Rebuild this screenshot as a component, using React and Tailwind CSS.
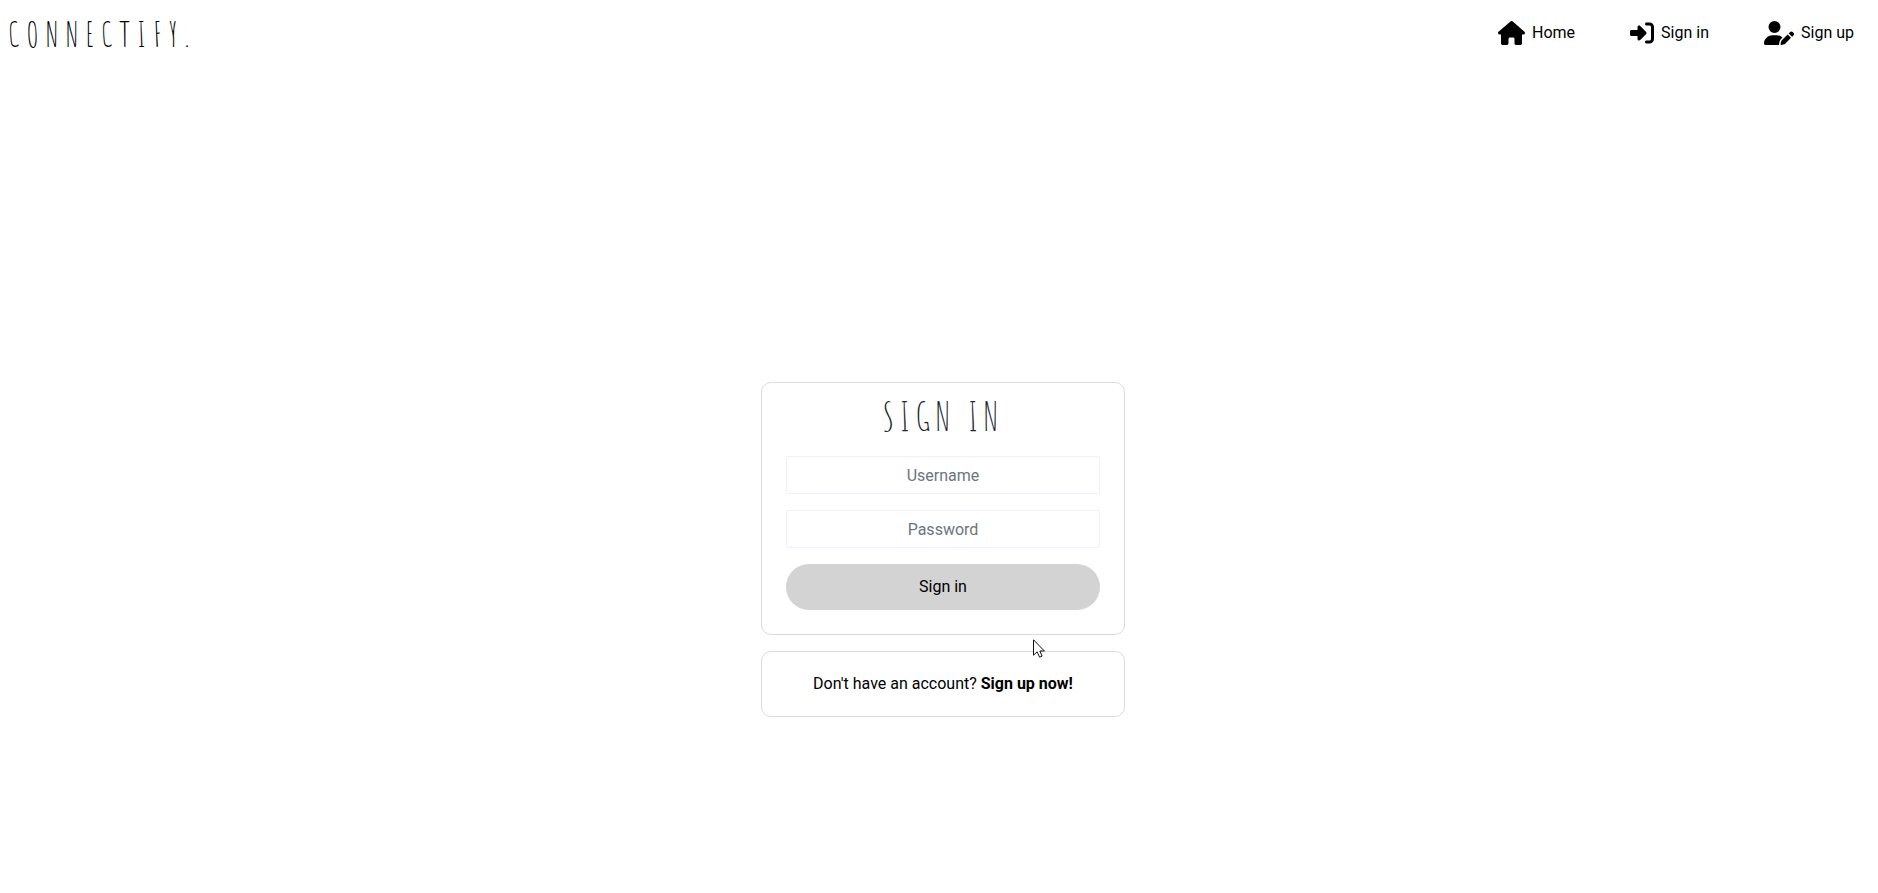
import { FaHouse, FaRightToBracket, FaUserPen } from "react-icons/fa6";

const links = [
  { label: "Home", href: "#home", Icon: FaHouse, size: "h-6 w-[27px]" },
  { label: "Sign in", href: "#signin", Icon: FaRightToBracket, size: "size-6" },
  { label: "Sign up", href: "#signup", Icon: FaUserPen, size: "h-6 w-[30px]" },
];

const displayFont = "font-['Amatic_SC',Roboto,sans-serif] font-normal";

function Field({ id, label, type, autoComplete }) {
  return (
    <input
      id={id}
      name={id}
      type={type}
      autoComplete={autoComplete}
      aria-label={label}
      placeholder={label}
      className="block h-[38px] w-full rounded-xs border border-[#f0f0fa] bg-white px-3 text-center text-base text-[#212529] placeholder:text-[#6c757d]"
    />
  );
}

function Pointer() {
  return (
    <svg
      aria-hidden="true"
      viewBox="0 0 12 19"
      className="pointer-events-none absolute top-[257px] left-[272px] h-[19px] w-3"
    >
      <path d="M.5 .8V16.2L4.1 12.8L6.6 18.2L9.1 17.1L6.8 12H11.4Z" fill="#fff" stroke="#111" strokeWidth="1" />
    </svg>
  );
}

export default function App() {
  return (
    <div className="min-h-screen bg-white font-[Roboto,sans-serif] text-base text-black">
      <header className="flex h-[66px] items-center justify-between pr-6 pl-2">
        <a href="#home" className={`${displayFont} text-[34px] tracking-[7px]`}>CONNECTIFY.</a>
        <nav className="flex gap-[55px]">
          {links.map(({ label, href, Icon, size }) => (
            <a key={label} href={href} className="flex items-center gap-[7px]">
              <Icon className={size} />
              {label}
            </a>
          ))}
        </nav>
      </header>

      <main className="flex justify-center pt-[316px] pl-2">
        <div className="relative flex w-[364px] flex-col gap-4">
          <section className="rounded-[10px] border border-[#dbdbdb] px-6 pb-6">
            <h1 className={`${displayFont} mb-2 flex h-[65px] items-center justify-center text-[40px] leading-none tracking-[5px] text-[#212529]`}>SIGN IN</h1>
            <form className="flex flex-col gap-4" onSubmit={(e) => e.preventDefault()}>
              <Field id="username" label="Username" type="text" autoComplete="username" />
              <Field id="password" label="Password" type="password" autoComplete="current-password" />
              <button type="submit" className="h-[46px] w-full rounded-full bg-[#d3d3d3]">Sign in</button>
            </form>
          </section>
          <section className="flex h-[66px] items-center justify-center rounded-[10px] border border-[#dbdbdb]">
            <p>
              Don't have an account? <a href="#signup" className="font-bold">Sign up now!</a>
            </p>
          </section>
          <Pointer />
        </div>
      </main>
    </div>
  );
}
